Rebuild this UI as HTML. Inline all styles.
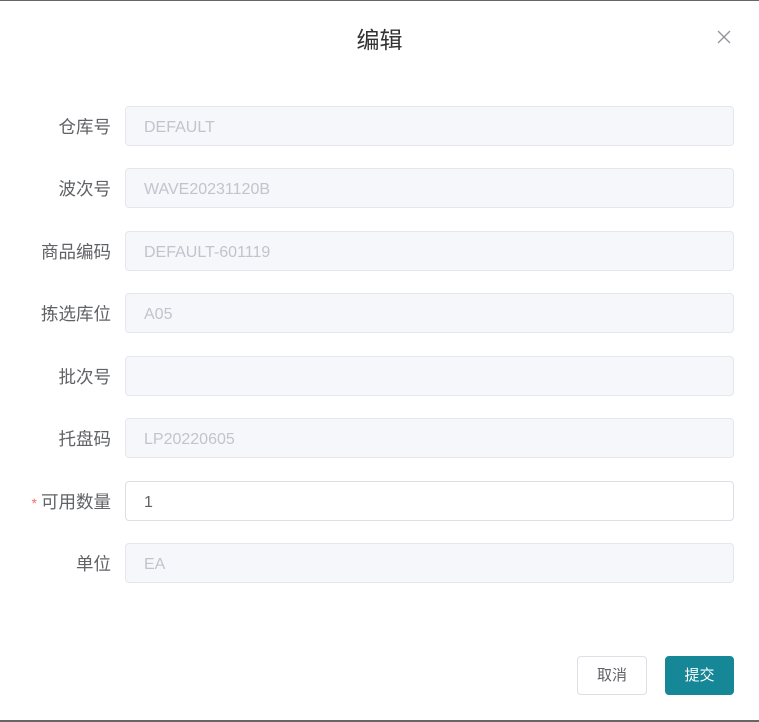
<!DOCTYPE html>
<html><head><meta charset="utf-8"><style>
*{box-sizing:border-box;margin:0;padding:0}
body{width:759px;height:722px;background:#fff;position:relative;overflow:hidden;font-family:"Liberation Sans","Noto Sans CJK SC",sans-serif}
.top{position:absolute;left:0;top:0;width:759px;height:1px;background:#666}
.bot{position:absolute;left:0;top:720px;width:759px;height:2px;background:#666}
.title{position:absolute;left:0;width:759px;top:24px;text-align:center;font-size:23px;color:#333;line-height:32px}
.x{position:absolute;left:716px;top:29px}
.lbl{position:absolute;right:648px;font-size:17.5px;color:#606266;line-height:42px}
.lbl .s{color:#f56c6c;margin-right:4px;font-size:14px}
.in{position:absolute;left:125px;width:609px;height:40px;border:1px solid #e4e7ed;background:#f5f7fa;border-radius:4px;padding-left:18px;font-size:16px;color:#c0c4cc;line-height:41px}
.in.w{background:#fff;border-color:#dcdfe6;color:#606266}
.btn{position:absolute;top:656px;height:39px;width:70px;border-radius:4px;font-size:15px;text-align:center;line-height:38px}
</style></head><body>
<div class="top"></div><div class="bot"></div>
<div class="title">编辑</div>
<svg class="x" width="16" height="16" viewBox="0 0 16 16"><path d="M2 2L14 14M14 2L2 14" stroke="#909399" stroke-width="1.3"/></svg>
<div class="lbl" style="top:106px">仓库号</div><div class="in" style="top:106px">DEFAULT</div>
<div class="lbl" style="top:168px">波次号</div><div class="in" style="top:168px">WAVE20231120B</div>
<div class="lbl" style="top:231px">商品编码</div><div class="in" style="top:231px">DEFAULT-601119</div>
<div class="lbl" style="top:293px">拣选库位</div><div class="in" style="top:293px">A05</div>
<div class="lbl" style="top:356px">批次号</div><div class="in" style="top:356px"></div>
<div class="lbl" style="top:418px">托盘码</div><div class="in" style="top:418px">LP20220605</div>
<div class="lbl" style="top:481px"><span class="s">*</span>可用数量</div><div class="in w" style="top:481px">1</div>
<div class="lbl" style="top:543px">单位</div><div class="in" style="top:543px">EA</div>
<div class="btn" style="left:577px;border:1px solid #dcdfe6;color:#606266;background:#fff">取消</div>
<div class="btn" style="left:665px;width:69px;background:#168797;color:#fff;border:1px solid #168797">提交</div>
</body></html>
